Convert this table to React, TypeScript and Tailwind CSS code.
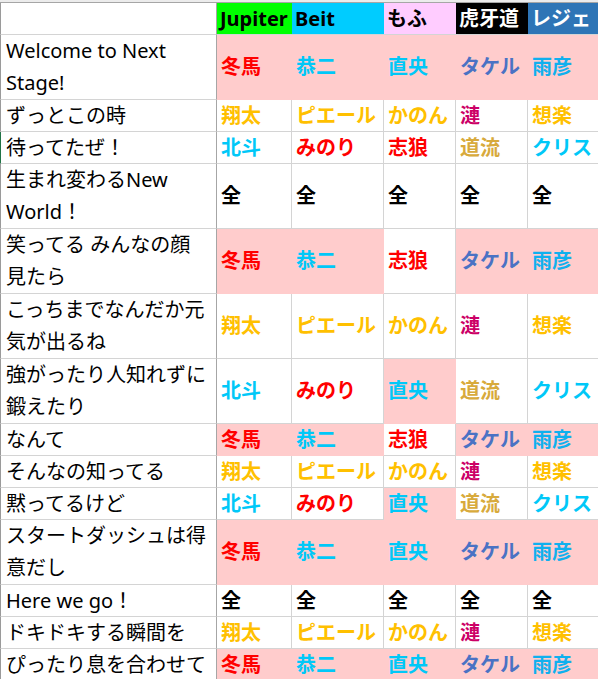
import React from 'react';

type Cell = { name: string; color: string; pink?: boolean };
type Row = { lines: string[]; cells: Cell[]; tall?: boolean; mark?: boolean };

const RED = '#ff0000';
const CYAN = '#00c8f8';
const BLUE = '#4a72c4';
const SKY = '#10b0ee';
const GOLD = '#ffc000';
const ROSE = '#cc0066';
const OCHRE = '#d8aa3c';

const c = (name: string, color: string, pink = false): Cell => ({ name, color, pink });

const all = (): Cell[] => [0, 1, 2, 3, 4].map(() => c('全', '#000000'));
const jupiter = (): Cell[] => [c('冬馬', RED, true), c('恭二', CYAN, true), c('直央', CYAN, true), c('タケル', BLUE, true), c('雨彦', SKY, true)];
const second = (): Cell[] => [c('翔太', GOLD), c('ピエール', GOLD), c('かのん', GOLD), c('漣', ROSE), c('想楽', GOLD)];
const third = (pinkMid = false): Cell[] => [c('北斗', CYAN), c('みのり', RED), c(pinkMid ? '直央' : '志狼', pinkMid ? CYAN : RED, pinkMid), c('道流', OCHRE), c('クリス', CYAN)];
const mixed = (): Cell[] => [c('冬馬', RED, true), c('恭二', CYAN, true), c('志狼', RED), c('タケル', BLUE, true), c('雨彦', SKY, true)];

const rows: Row[] = [
  { lines: ['Welcome to Next', 'Stage!'], cells: jupiter(), tall: true },
  { lines: ['ずっとこの時'], cells: second() },
  { lines: ['待ってたぜ！'], cells: third(), mark: true },
  { lines: ['生まれ変わるNew', 'World！'], cells: all(), tall: true },
  { lines: ['笑ってる みんなの顔', '見たら'], cells: mixed(), tall: true },
  { lines: ['こっちまでなんだか元', '気が出るね'], cells: second(), tall: true },
  { lines: ['強がったり人知れずに', '鍛えたり'], cells: third(true), tall: true },
  { lines: ['なんて'], cells: mixed() },
  { lines: ['そんなの知ってる'], cells: second() },
  { lines: ['黙ってるけど'], cells: third(true) },
  { lines: ['スタートダッシュは得', '意だし'], cells: jupiter(), tall: true },
  { lines: ['Here we go！'], cells: all() },
  { lines: ['ドキドキする瞬間を'], cells: second() },
  { lines: ['ぴったり息を合わせて'], cells: jupiter() },
];

const headers = [
  { label: 'Jupiter', bg: '#00ff00', fg: '#000000' },
  { label: 'Beit', bg: '#00ccff', fg: '#000000' },
  { label: 'もふ', bg: '#ffccff', fg: '#000000' },
  { label: '虎牙道', bg: '#000000', fg: '#ffffff' },
  { label: 'レジェ', bg: '#2e75b6', fg: '#ffffff' },
];

const font = { fontFamily: '"Noto Sans", "Noto Sans CJK JP", sans-serif' };

export default function App() {
  return (
    <div className="w-[598px] h-[679px] overflow-hidden bg-white" style={font}>
      <div className="h-[2px] bg-[#ececec]" />
      <div className="grid grid-cols-[217px_75px_92px_72px_72px_70px] border-t border-[#a6a6a6] text-[20px] text-black">
        <div className="h-[32px] border-l border-l-[#9a9a9a] border-r border-r-[#a6a6a6] border-b border-b-[#d4d4d4]" />
        {headers.map((h) => (
          <div
            key={h.label}
            className="h-[32px] flex items-center pl-[3px] font-bold whitespace-nowrap overflow-hidden border-b border-b-[#d4d4d4]"
            style={{ backgroundColor: h.bg, color: h.fg }}
          >
            {h.label}
          </div>
        ))}
        {rows.map((r, i) => (
          <React.Fragment key={i}>
            <div
              className={`${r.tall ? 'h-[65px]' : 'h-[32px]'} flex flex-col justify-center pl-[5px] leading-[32px] whitespace-nowrap border-l border-r border-b border-r-[#a6a6a6] border-b-[#d4d4d4] ${
                r.mark ? 'border-l-[#217346]' : 'border-l-[#9a9a9a]'
              }`}
            >
              {r.lines.map((l) => (
                <span key={l}>{l}</span>
              ))}
            </div>
            {r.cells.map((cell, j) => (
              <div
                key={j}
                className={`${r.tall ? 'h-[65px]' : 'h-[32px]'} flex items-center pl-[4px] font-bold whitespace-nowrap overflow-hidden border-b ${
                  j < 4 ? 'border-r' : ''
                } ${cell.pink ? 'bg-[#ffcccc] border-[#ffcccc]' : 'border-[#d4d4d4]'}`}
                style={{ color: cell.color }}
              >
                {cell.name}
              </div>
            ))}
          </React.Fragment>
        ))}
      </div>
    </div>
  );
}
